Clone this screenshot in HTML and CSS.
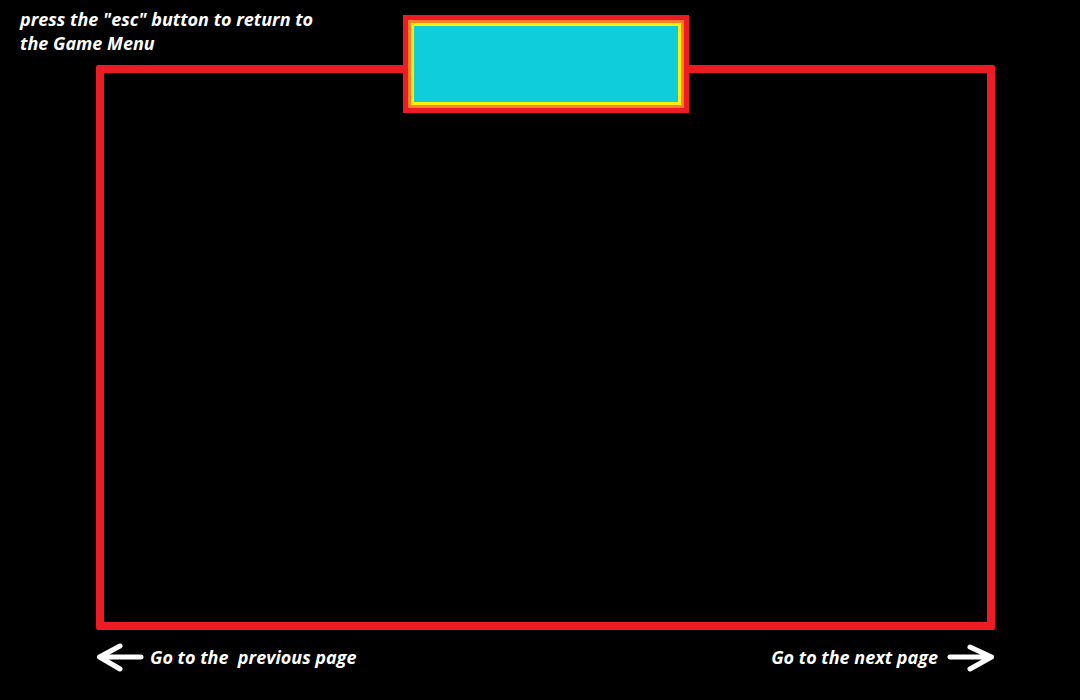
FILE: index.html
```html
<!DOCTYPE html>
<html lang="en">
<head>
<meta charset="utf-8">
<title>Page</title>
<link rel="stylesheet" href="styles.css">
</head>
<body>
<div class="page">
  <p class="hint">press the "esc" button to return to<br>the Game Menu</p>
  <div class="frame">
    <div class="title-box">
      <div class="title-orange">
        <div class="title-yellow">
          <div class="title-core"></div>
        </div>
      </div>
    </div>
  </div>
  <div class="nav">
    <div class="nav-item">
      <svg class="arrow" width="50" height="31" viewBox="0 0 50 31" aria-hidden="true">
        <path d="M4.5 15 H46 M25 4 L4.5 15 L25 27" fill="none" stroke="#fff" stroke-width="5" stroke-linecap="round" stroke-linejoin="round"/>
      </svg>
      <span class="nav-text">Go to the&nbsp; previous page</span>
    </div>
    <div class="nav-item">
      <span class="nav-text">Go to the next page</span>
      <svg class="arrow" width="51" height="31" viewBox="0 0 51 31" aria-hidden="true">
        <path d="M5 15 H46.5 M25 5 L46.5 15 L25 27" fill="none" stroke="#fff" stroke-width="5" stroke-linecap="round" stroke-linejoin="round"/>
      </svg>
    </div>
  </div>
</div>
</body>
</html>
```
FILE: styles.css
```css
html, body {
  margin: 0;
  padding: 0;
  background: #000;
}
.page {
  width: 1080px;
  height: 700px;
  background: #000;
  font-family: "Open Sans", "Noto Sans", sans-serif;
  font-weight: 700;
  font-style: italic;
  color: #fff;
  overflow: hidden;
}
.hint {
  margin: 0;
  padding: 7px 0 0 20px;
  font-size: 18px;
  line-height: 24px;
  height: 59px;
  box-sizing: border-box;
}
.frame {
  position: relative;
  margin-left: 96px;
  margin-top: 6px;
  width: 899px;
  height: 565px;
  box-sizing: border-box;
  border: 8px solid #ed1c24;
  border-radius: 2px;
}
.title-box {
  position: absolute;
  left: 299px;
  top: -58px;
  width: 286px;
  height: 98px;
  box-sizing: border-box;
  border: 5px solid #ed1c24;
  display: flex;
}
.title-orange {
  flex: 1;
  border: 3px solid #ff7f27;
  display: flex;
}
.title-yellow {
  flex: 1;
  border: 3px solid #fff200;
  display: flex;
}
.title-core {
  flex: 1;
  background: #0fcddb;
}
.nav {
  margin-left: 95px;
  width: 901px;
  height: 54px;
  display: flex;
  justify-content: space-between;
  align-items: center;
}
.nav-item {
  display: flex;
  align-items: center;
}
.nav-item:first-child {
  gap: 5px;
}
.nav-item:last-child {
  gap: 7px;
}
.arrow {
  display: block;
}
.nav-text {
  font-size: 18px;
  line-height: 22px;
}
```
